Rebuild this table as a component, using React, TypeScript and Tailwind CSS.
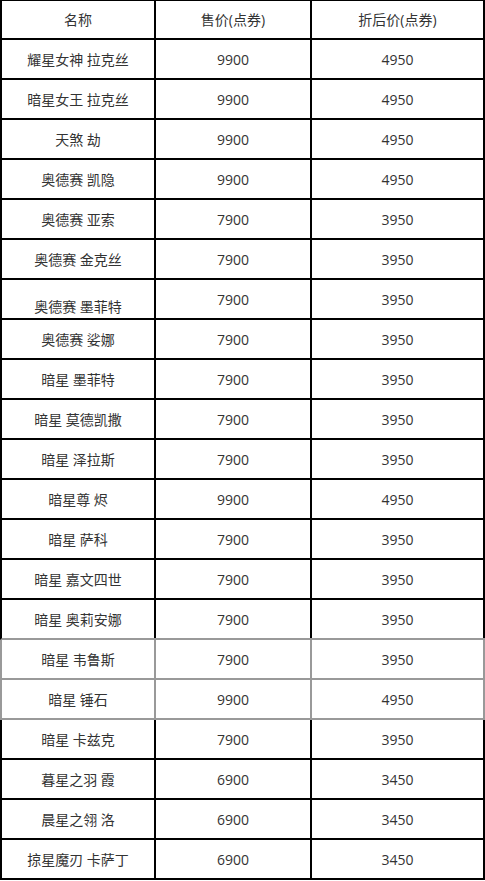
const ROWS = [
  { name: "耀星女神 拉克丝", price: "9900", sale: "4950" },
  { name: "暗星女王 拉克丝", price: "9900", sale: "4950" },
  { name: "天煞 劫", price: "9900", sale: "4950" },
  { name: "奥德赛 凯隐", price: "9900", sale: "4950" },
  { name: "奥德赛 亚索", price: "7900", sale: "3950" },
  { name: "奥德赛 金克丝", price: "7900", sale: "3950" },
  { name: "奥德赛 墨菲特", price: "7900", sale: "3950", low: true },
  { name: "奥德赛 娑娜", price: "7900", sale: "3950" },
  { name: "暗星 墨菲特", price: "7900", sale: "3950" },
  { name: "暗星 莫德凯撒", price: "7900", sale: "3950" },
  { name: "暗星 泽拉斯", price: "7900", sale: "3950" },
  { name: "暗星尊 烬", price: "9900", sale: "4950" },
  { name: "暗星 萨科", price: "7900", sale: "3950" },
  { name: "暗星 嘉文四世", price: "7900", sale: "3950" },
  { name: "暗星 奥莉安娜", price: "7900", sale: "3950" },
  { name: "暗星 韦鲁斯", price: "7900", sale: "3950", gray: true },
  { name: "暗星 锤石", price: "9900", sale: "4950", gray: true },
  { name: "暗星 卡兹克", price: "7900", sale: "3950" },
  { name: "暮星之羽 霞", price: "6900", sale: "3450" },
  { name: "晨星之翎 洛", price: "6900", sale: "3450" },
  { name: "掠星魔刃 卡萨丁", price: "6900", sale: "3450" },
];

export default function App() {
  return (
    <div
      className="w-[485px] bg-white text-[14px] text-[#333] border-t border-black"
      style={{ fontFamily: '"Open Sans", "Noto Sans CJK SC", sans-serif' }}
    >
      {/* header */}
      <div className="grid grid-cols-[154px_156px_1fr] h-[39px] border-l-2 border-b-2 border-black">
        <div className="flex items-center justify-center border-r-2 border-black">名称</div>
        <div className="flex items-center justify-center border-r-2 border-black">售价(点券)</div>
        <div className="flex items-center justify-center border-r-2 border-black">折后价(点券)</div>
      </div>

      {ROWS.map((row, i) => {
        const next = ROWS[i + 1];
        const side = row.gray ? "border-[#999]" : "border-black";
        const bottom = row.gray || next?.gray ? "border-b-[#999]" : "border-b-black";
        return (
          <div
            key={row.name}
            className={`grid grid-cols-[154px_156px_1fr] h-[40px] border-l-2 border-b-2 ${side} ${bottom}`}
          >
            <div className={`flex items-center justify-center border-r-2 ${side} ${row.low ? "pt-[14px]" : ""}`}>
              {row.name}
            </div>
            <div className={`flex items-center justify-center border-r-2 ${side}`}>{row.price}</div>
            <div className={`flex items-center justify-center border-r-2 ${side}`}>{row.sale}</div>
          </div>
        );
      })}
    </div>
  );
}
